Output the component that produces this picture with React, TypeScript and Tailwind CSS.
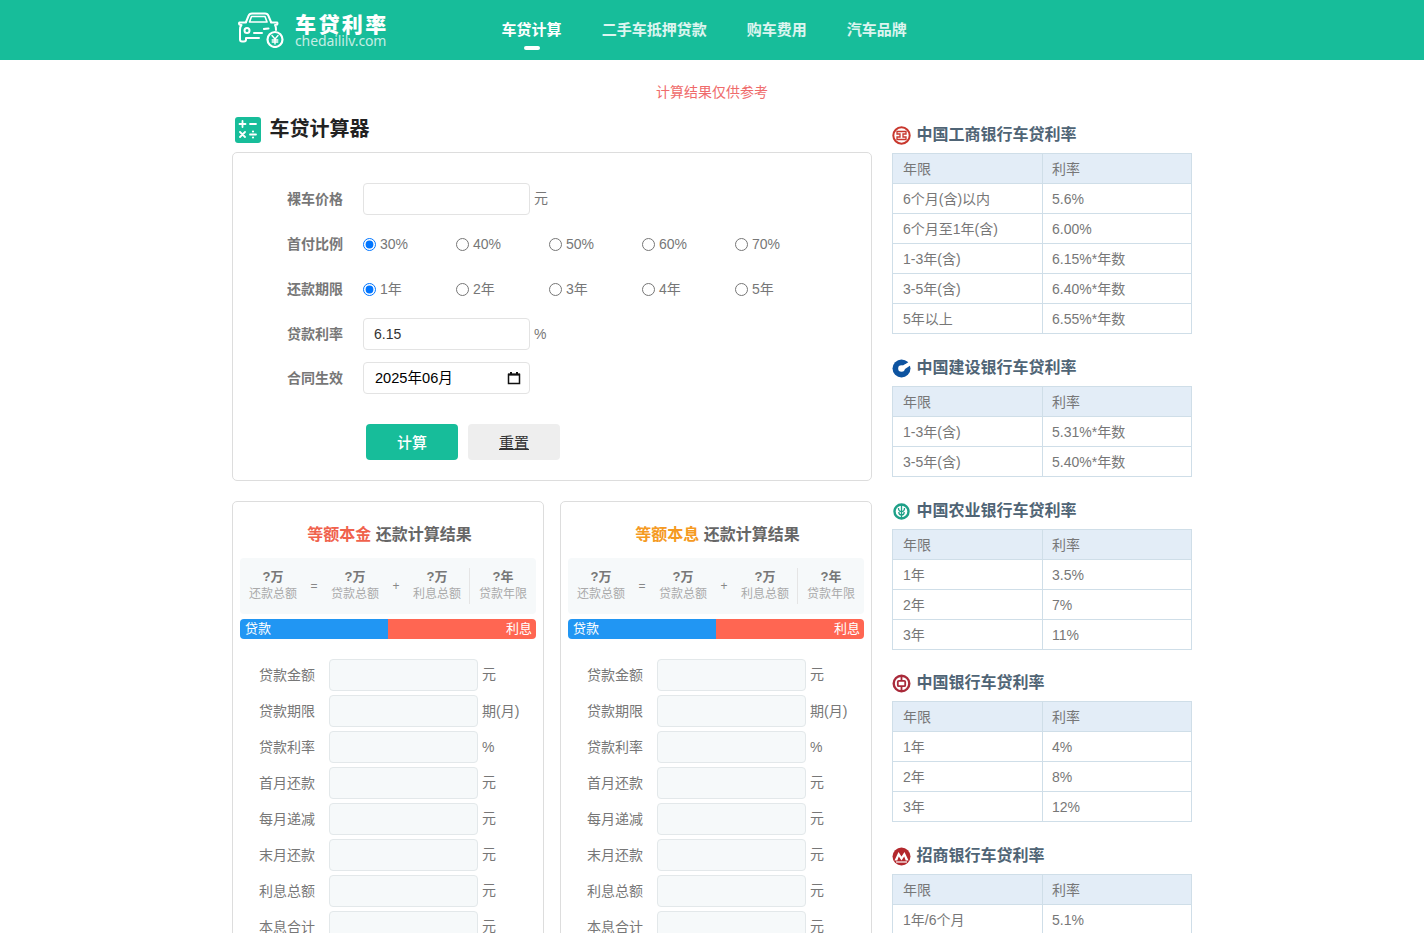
import type { ReactNode } from 'react'

type Rate = [string, string]

function CarLogo() {
  return (
    <svg width="48" height="36" viewBox="0 0 48 36" fill="none" stroke="#fff" strokeWidth="2" strokeLinecap="round" strokeLinejoin="round">
      <path d="M9 10l2.500-6c.5-1.500 1.500-2.500 3.500-2.500h13c2 0 3 1 3.500 2.500L34 10" />
      <path d="M12.500 10l2-5.500h13.500l2 5.500z" strokeWidth="1.600" />
      <path d="M9 10.500H4.500c-1.500 0-2.500-.5-2.500 1 0 1 .8 1.500 2.500 1.500C3 14.500 3 16 3 18v9.500c0 1.500 1 2 2 2h2c1 0 2-.5 2-2V26h13" />
      <path d="M34 10.500h4c1.500 0 2.500-.5 2.500 1 0 1-1 1.500-2.500 1.500 1 1.500 1 3 1 5" />
      <circle cx="10" cy="18.500" r="2.500" />
      <path d="M17 21h8M27 17c1-.5 2.500-.5 4.500-.5" />
      <circle cx="38" cy="27.500" r="7.500" strokeWidth="2.200" />
      <path d="M35 23.500l3 3.500 3-3.500M38 27v5M35.200 28h5.600M35.200 30h5.600" strokeWidth="1.400" />
    </svg>
  )
}

function CalcIcon() {
  return (
    <svg width="26" height="26" viewBox="0 0 26 26">
      <rect width="26" height="26" rx="3" fill="#17bd9a" />
      <g stroke="#fff" strokeWidth="1.800" strokeLinecap="round" fill="none">
        <path d="M4.500 7h6M7.500 4v6M15 7h6M5 15l5 5M10 15l-5 5M15 17.500h6" />
      </g>
      <circle cx="18" cy="14.500" r="1.100" fill="#fff" />
      <circle cx="18" cy="20.500" r="1.100" fill="#fff" />
    </svg>
  )
}

function IcbcIcon() {
  return (
    <svg width="19" height="19" viewBox="0 0 19 19" fill="none" stroke="#c8372d">
      <circle cx="9.500" cy="9.500" r="8.200" strokeWidth="2" />
      <path d="M5 5.500h9v2.500h-3v3h3v2.500H5V11h3V8H5z" strokeWidth="1.300" />
    </svg>
  )
}

function CcbIcon() {
  return (
    <svg width="19" height="19" viewBox="0 0 19 19">
      <circle cx="9.500" cy="9.500" r="9" fill="#0d53a0" />
      <circle cx="9.500" cy="9.500" r="3.300" fill="#fff" />
      <path d="M10 7L17.500 2.500 19 6 11.500 11z" fill="#fff" />
      <path d="M12.500 1.500L16 3 13 5z" fill="#0d53a0" />
    </svg>
  )
}

function AbcIcon() {
  return (
    <svg width="19" height="19" viewBox="0 0 19 19" fill="none" stroke="#1ea088">
      <circle cx="9.500" cy="9.500" r="7" strokeWidth="2.400" />
      <path d="M9.500 2v15M6.500 6c0 2.500 1.300 3.500 3 3.500s3-1 3-3.500M6.800 10c0 2 1.100 3 2.700 3s2.700-1 2.700-3" strokeWidth="1.300" />
    </svg>
  )
}

function BocIcon() {
  return (
    <svg width="19" height="19" viewBox="0 0 19 19" fill="none" stroke="#a92a3a">
      <circle cx="9.500" cy="9.500" r="7.800" strokeWidth="2.400" />
      <rect x="5.800" y="6.800" width="7.400" height="5.400" rx="1" strokeWidth="1.800" />
      <path d="M9.500 2v4.800M9.500 12.200V17" strokeWidth="1.800" />
    </svg>
  )
}

function CmbIcon() {
  return (
    <svg width="19" height="19" viewBox="0 0 19 19">
      <circle cx="9.500" cy="9.500" r="9" fill="#b3282d" />
      <path d="M2.500 13.500L6.500 5l3 4.500L12.500 5l4 8.500h-2.800L12.200 9.500 9.500 13.500 6.800 9.500l-1.500 4z" fill="#fff" />
      <path d="M4 15h11" stroke="#fff" strokeWidth="1.200" />
    </svg>
  )
}

const banks: { name: string; icon: ReactNode; rates: Rate[]; gap: string }[] = [
  {
    name: '中国工商银行车贷利率',
    icon: <IcbcIcon />,
    gap: 'mb-5',
    rates: [
      ['6个月(含)以内', '5.6%'],
      ['6个月至1年(含)', '6.00%'],
      ['1-3年(含)', '6.15%*年数'],
      ['3-5年(含)', '6.40%*年数'],
      ['5年以上', '6.55%*年数'],
    ],
  },
  {
    name: '中国建设银行车贷利率',
    icon: <CcbIcon />,
    gap: 'mb-5',
    rates: [
      ['1-3年(含)', '5.31%*年数'],
      ['3-5年(含)', '5.40%*年数'],
    ],
  },
  {
    name: '中国农业银行车贷利率',
    icon: <AbcIcon />,
    gap: 'mb-[19.400px]',
    rates: [
      ['1年', '3.5%'],
      ['2年', '7%'],
      ['3年', '11%'],
    ],
  },
  {
    name: '中国银行车贷利率',
    icon: <BocIcon />,
    gap: 'mb-[19.800px]',
    rates: [
      ['1年', '4%'],
      ['2年', '8%'],
      ['3年', '12%'],
    ],
  },
  {
    name: '招商银行车贷利率',
    icon: <CmbIcon />,
    gap: 'mb-5',
    rates: [
      ['1年/6个月', '5.1%'],
      ['2年', '5.5%'],
    ],
  },
]

const resultRows = [
  ['贷款金额', '元'],
  ['贷款期限', '期(月)'],
  ['贷款利率', '%'],
  ['首月还款', '元'],
  ['每月递减', '元'],
  ['末月还款', '元'],
  ['利息总额', '元'],
  ['本息合计', '元'],
]

function SummaryCell({ value, label }: { value: string; label: string }) {
  return (
    <div className="flex w-12 flex-col items-center">
      <span className="text-[13px] leading-[17px] font-bold text-[#777]">{value}</span>
      <span className="text-xs leading-[19px] whitespace-nowrap text-[#aaa]">{label}</span>
    </div>
  )
}

function ResultCard({ method, color }: { method: string; color: string }) {
  return (
    <div className="h-[460px] w-[312px] rounded-[5px] border border-[#ddd] px-[7px]">
      <h3 className="mt-[21px] pl-[3px] text-center text-base leading-6 font-bold text-[#666]">
        <span className={color}>{method}</span> 还款计算结果
      </h3>
      <div className="mt-[11px] flex h-14 items-center rounded bg-[#f6f9fa] pl-[9px]">
        <SummaryCell value="?万" label="还款总额" />
        <span className="w-[34px] text-center text-xs text-[#888]">=</span>
        <SummaryCell value="?万" label="贷款总额" />
        <span className="w-[34px] text-center text-xs text-[#888]">+</span>
        <SummaryCell value="?万" label="利息总额" />
        <div className="mr-[9px] ml-2 h-9 w-px bg-[#e5e5e5]" />
        <SummaryCell value="?年" label="贷款年限" />
      </div>
      <div className="mt-[5px] flex h-5 overflow-hidden rounded text-[13px] leading-5 text-white">
        <div className="w-1/2 bg-[#2196f3] pl-[5px]">贷款</div>
        <div className="w-1/2 bg-[#ff6652] pr-1 text-right">利息</div>
      </div>
      <div className="mt-5 flex flex-col gap-1">
        {resultRows.map(([label, unit]) => (
          <div key={label} className="flex items-center text-sm text-[#777]">
            <span className="w-[75px] text-right whitespace-nowrap">{label}</span>
            <div className="ml-[14px] h-8 w-[149px] rounded border border-[#e3e8ea] bg-[#f6f9fa]" />
            <span className={unit === '元' ? 'ml-1 pb-[2px]' : 'ml-1'}>{unit}</span>
          </div>
        ))}
      </div>
    </div>
  )
}

function FormLabel({ children }: { children: ReactNode }) {
  return <span className="w-[56px] text-sm font-bold whitespace-nowrap text-[#777]">{children}</span>
}

function RadioRow({ name, options }: { name: string; options: string[] }) {
  return (
    <div className="ml-5 flex">
      {options.map((option, i) => (
        <label key={option} className="flex w-[93px] items-center gap-1 text-sm text-[#777]">
          <input type="radio" name={name} defaultChecked={i === 0} className="m-0 h-[13px] w-[13px]" />
          {option}
        </label>
      ))}
    </div>
  )
}

export default function App() {
  return (
    <div className="h-[933px] overflow-hidden bg-white font-['Liberation_Sans','Noto_Sans_CJK_SC',sans-serif]">
      <header className="h-[60px] bg-[#17bd9a]">
        <div className="mx-auto flex w-[960px] items-center">
          <div className="ml-[5px] flex h-[60px] items-center">
            <CarLogo />
            <div className="ml-[10px] flex flex-col pt-px font-['Noto_Sans_CJK_SC',sans-serif] text-white">
              <span className="text-[21px] leading-5 font-black tracking-[2.400px]">车贷利率</span>
              <span className="mt-px font-['Noto_Sans',sans-serif] text-[14px] leading-[14px] tracking-[-0.1px] text-white/75">chedaililv.com</span>
            </div>
          </div>
          <nav className="ml-[113px] flex gap-10 text-[15px] font-bold text-white/85">
            <a className="relative text-white">
              车贷计算
              <span className="absolute top-[27px] left-[22px] h-1 w-4 rounded-full bg-white" />
            </a>
            <a>二手车抵押贷款</a>
            <a>购车费用</a>
            <a>汽车品牌</a>
          </nav>
        </div>
      </header>

      <p className="mt-[23px] text-center text-sm leading-[18px] text-[#ef6b6b]">计算结果仅供参考</p>

      <main className="mx-auto mt-[16px] flex w-[960px] gap-5">
        <div className="w-[640px]">
          <div className="ml-[3px] flex h-[26px] items-center gap-[8.500px]">
            <CalcIcon />
            <h1 className="pb-[3px] text-xl font-bold text-[#222]">车贷计算器</h1>
          </div>
          <section className="mt-[9px] h-[329px] rounded-[5px] border border-[#ddd] pt-[30px] pl-[54px]">
            <div className="flex h-8 items-center">
              <FormLabel>裸车价格</FormLabel>
              <div className="ml-5 h-8 w-[167px] rounded border border-[#e3e3e3]" />
              <span className="ml-1 pb-[2px] text-sm text-[#777]">元</span>
            </div>
            <div className="mt-[13px] flex h-8 items-center">
              <FormLabel>首付比例</FormLabel>
              <RadioRow name="down" options={['30%', '40%', '50%', '60%', '70%']} />
            </div>
            <div className="mt-[13px] flex h-8 items-center">
              <FormLabel>还款期限</FormLabel>
              <RadioRow name="term" options={['1年', '2年', '3年', '4年', '5年']} />
            </div>
            <div className="mt-[13px] flex h-8 items-center">
              <FormLabel>贷款利率</FormLabel>
              <div className="ml-5 flex h-8 w-[167px] items-center rounded border border-[#e3e3e3] pl-[10px] text-sm text-[#333]">6.15</div>
              <span className="ml-1 text-sm text-[#777]">%</span>
            </div>
            <div className="mt-3 flex h-8 items-center">
              <FormLabel>合同生效</FormLabel>
              <div className="ml-5 flex h-8 w-[167px] items-center justify-between rounded border border-[#e3e3e3] pr-[8px] pl-[11px] text-[14.600px] text-black">
                <span className="pt-[2px]">2025年06月</span>
                <svg width="14" height="14" viewBox="0 0 14 14" fill="none" stroke="#111">
                  <path d="M1.500 3.500h11v9h-11z" strokeWidth="1.500" />
                  <path d="M1 3.500h12M4 1v2M10 1v2" strokeWidth="2" />
                </svg>
              </div>
            </div>
            <div className="mt-[30px] ml-[79px] flex gap-[10px]">
              <button className="h-9 w-[92px] rounded bg-[#17bd9a] pt-[2px] text-[15px] font-medium text-white">计算</button>
              <button className="h-9 w-[92px] rounded bg-[#eee] pt-[2px] text-[15px] text-[#333] underline">重置</button>
            </div>
          </section>
          <div className="mt-5 flex gap-4">
            <ResultCard method="等额本金" color="text-[#f0624d]" />
            <ResultCard method="等额本息" color="text-[#f59a23]" />
          </div>
        </div>

        <aside className="w-[300px] pt-1">
          {banks.map((bank) => (
            <section key={bank.name} className={bank.gap}>
              <h2 className="flex h-8 items-center gap-[5.500px] pb-1 text-base font-bold text-[#4f6475]">
                {bank.icon}
                {bank.name}
              </h2>
              <table className="w-[300px] table-fixed border-collapse text-sm text-[#777]">
                <thead>
                  <tr className="h-[30px] bg-[#e3edf7]">
                    <th className="w-[150px] border border-[#cfdee8] pl-[10px] text-left font-normal">年限</th>
                    <th className="border border-[#cfdee8] pl-[9px] text-left font-normal">利率</th>
                  </tr>
                </thead>
                <tbody>
                  {bank.rates.map(([term, rate]) => (
                    <tr key={term} className="h-[30px]">
                      <td className="border border-[#cfdee8] pl-[10px]">{term}</td>
                      <td className="border border-[#cfdee8] pl-[9px]">{rate}</td>
                    </tr>
                  ))}
                </tbody>
              </table>
            </section>
          ))}
        </aside>
      </main>
    </div>
  )
}
